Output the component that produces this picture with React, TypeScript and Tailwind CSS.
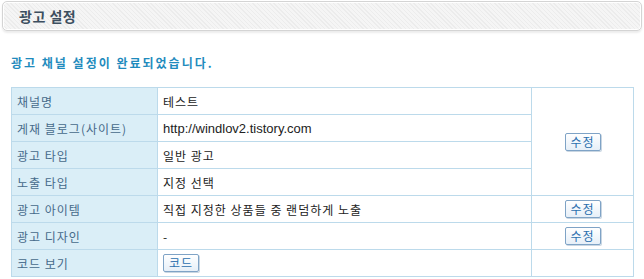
const font = "font-['Noto_Sans_CJK_KR',sans-serif]";

type Row = { label: string; value: string; latin?: boolean };

const rows: Row[] = [
  { label: "채널명", value: "테스트" },
  { label: "게재 블로그(사이트)", value: "http://windlov2.tistory.com", latin: true },
  { label: "광고 타입", value: "일반 광고" },
  { label: "노출 타입", value: "지정 선택" },
  { label: "광고 아이템", value: "직접 지정한 상품들 중 랜덤하게 노출" },
  { label: "광고 디자인", value: "-" },
];

function SmallButton({ children }: { children: React.ReactNode }) {
  return (
    <button className="h-[18px] w-[36px] rounded-[2px] border border-[#7fa3c6] bg-[linear-gradient(#ffffff,#e6eff8)] text-[12px] leading-[16px] tracking-[1px] text-[#2b6fae] shadow-[1px_1px_0_#c9d6e2]">
      {children}
    </button>
  );
}

export default function App() {
  const label = "border border-[#bcdaeb] bg-[#daeef7] p-0 pl-[5px] pt-[2px] text-left font-normal tracking-[1px] text-[#466a8a]";
  const cell = "border border-[#bcdaeb] p-0 pl-[5px] text-[#222]";

  return (
    <div className={`w-[644px] h-[279px] bg-white text-[12px] ${font}`}>
      <div className="mx-[2px] pt-[1px]">
        <div className="flex h-[30px] items-center rounded-[5px] border border-[#d4d4d4] bg-[repeating-linear-gradient(45deg,#ececec_0px,#ececec_1px,#f5f5f5_1px,#f5f5f5_3px)] pl-[16px] shadow-[0_2px_2px_rgba(0,0,0,0.08),inset_0_0_0_1px_#fff]">
          <span className="text-[14px] font-bold tracking-[0.5px] text-[#3d4f60]">광고 설정</span>
        </div>
      </div>

      <p className="mt-[25px] ml-[11px] text-[12px] font-bold leading-[14px] tracking-[2px] text-[#1f8bbd]">
        광고 채널 설정이 완료되었습니다.
      </p>

      <table className="mt-[17px] ml-[11px] w-[623px] border-collapse table-fixed">
        <colgroup>
          <col className="w-[146px]" />
          <col className="w-[374px]" />
          <col />
        </colgroup>
        <tbody>
          {rows.map((r, i) => (
            <tr key={r.label} className="h-[27px]">
              <th className={label}>{r.label}</th>
              <td
                className={`${cell} pt-[2px] ${
                  r.latin ? "font-['Liberation_Sans',sans-serif] text-[13px]" : "tracking-[1px]"
                }`}
              >
                {r.value}
              </td>
              {i === 0 && (
                <td rowSpan={4} className="border border-[#bcdaeb] p-0 text-center">
                  <SmallButton>수정</SmallButton>
                </td>
              )}
              {i >= 4 && (
                <td className="border border-[#bcdaeb] p-0 text-center">
                  <SmallButton>수정</SmallButton>
                </td>
              )}
            </tr>
          ))}
          <tr className="h-[27px]">
            <th className={label}>코드 보기</th>
            <td className={cell}>
              <SmallButton>코드</SmallButton>
            </td>
            <td className="border border-[#bcdaeb] p-0" />
          </tr>
        </tbody>
      </table>
    </div>
  );
}
